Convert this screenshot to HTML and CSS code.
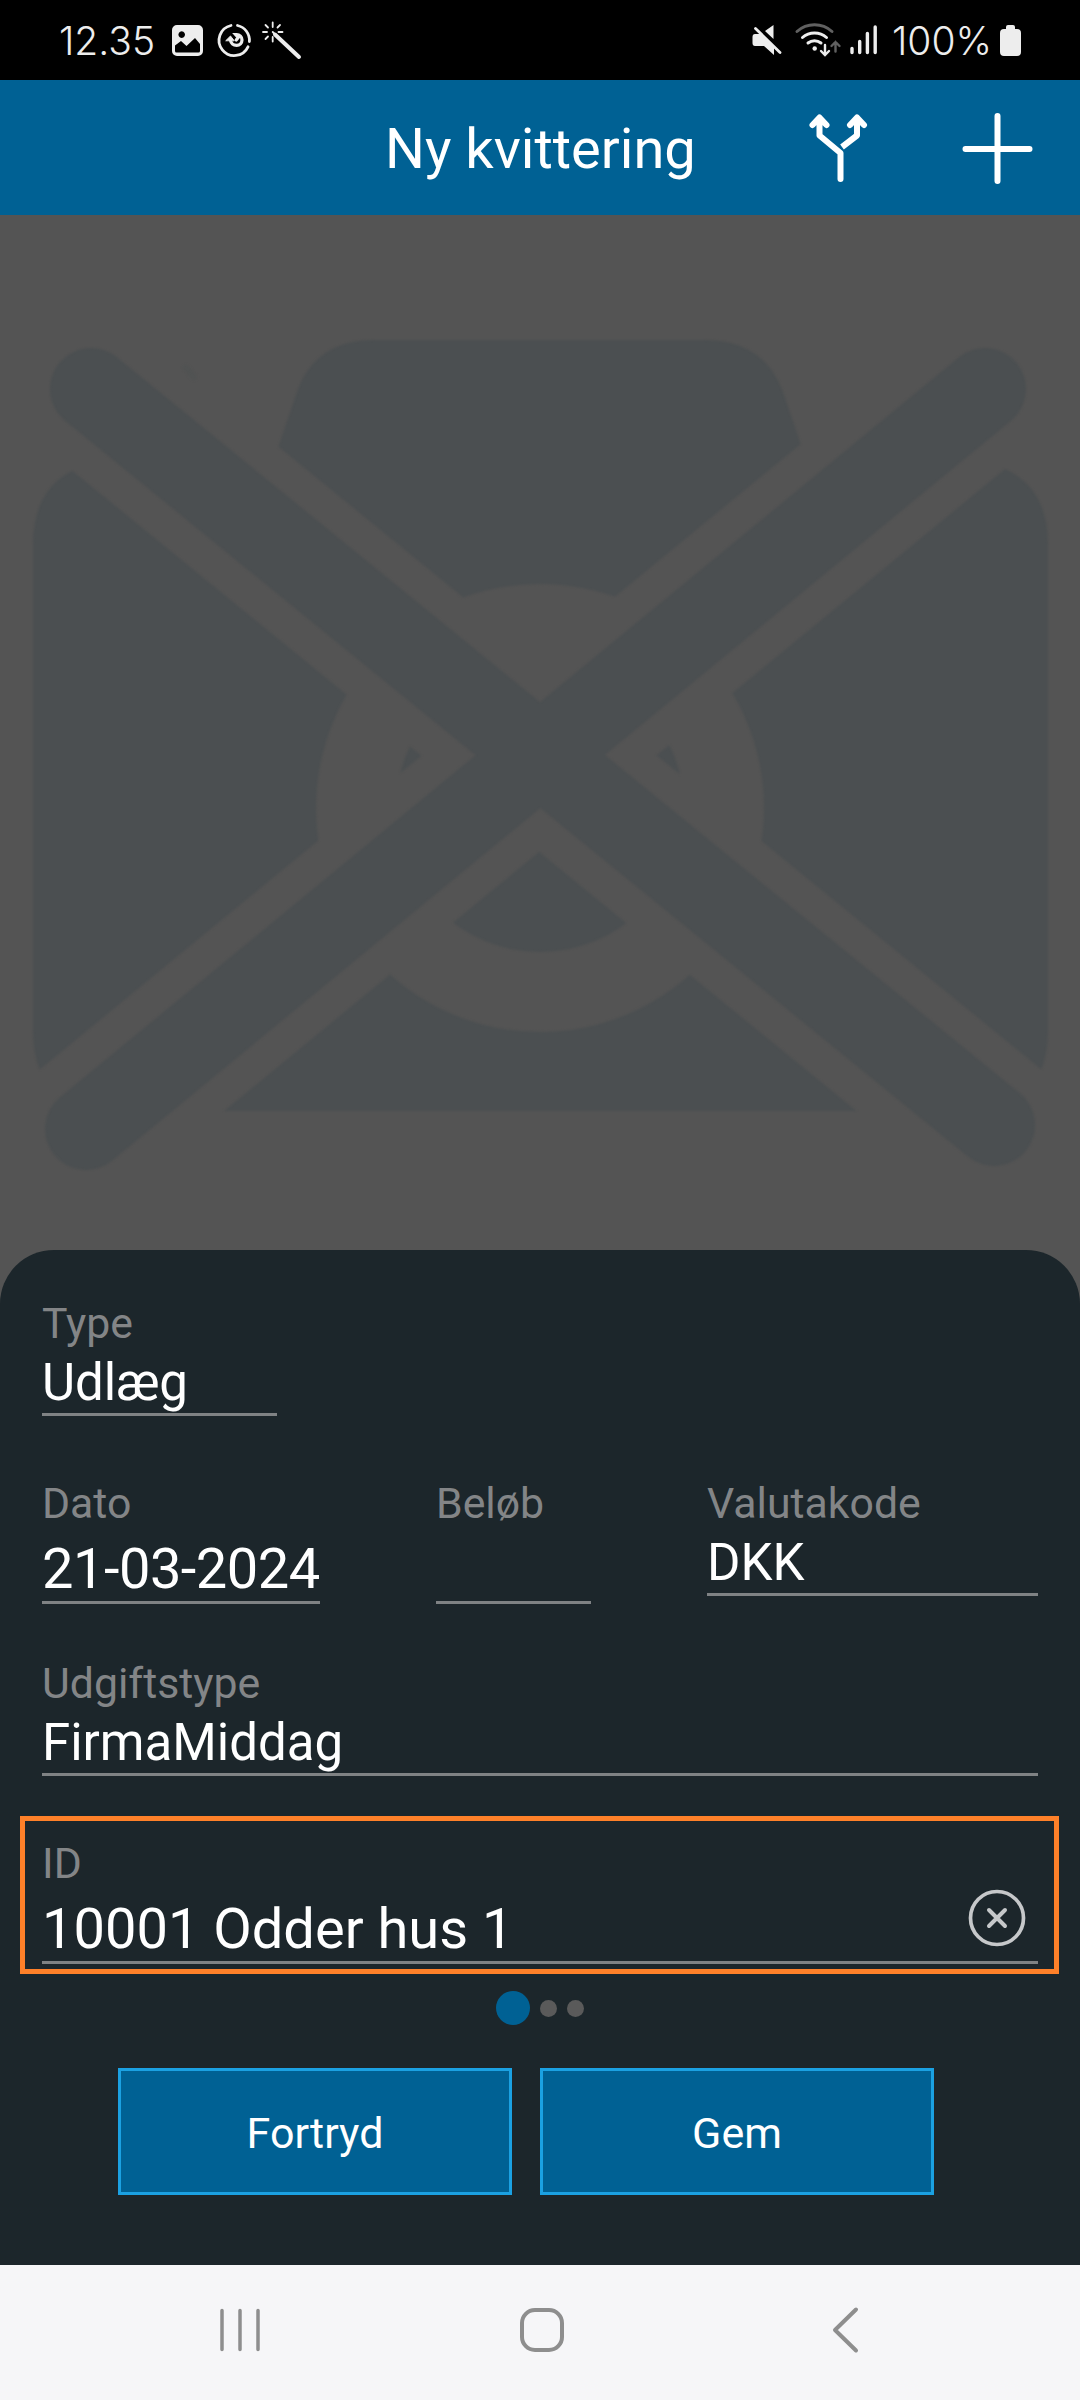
FILE: index.html
```html
<!DOCTYPE html>
<html lang="da">
<head>
<meta charset="utf-8">
<title>Ny kvittering</title>
<link rel="stylesheet" href="styles.css">
</head>
<body>
<div class="status">
  <span class="clock">12.35</span>
  <svg class="status-left" width="134" height="44" viewBox="170 18 134 44" fill="none" stroke="#ededed" stroke-linecap="round">
    <path fill="#ededed" stroke="none" fill-rule="evenodd" d="M177 25h21a5 5 0 0 1 5 5v21a5 5 0 0 1-5 5h-21a5 5 0 0 1-5-5V30a5 5 0 0 1 5-5zM181.700 31.300a3.300 3.300 0 1 0 .01 0zM175 45.500v5.500q0 1.500 1.500 1.500h22q1.500 0 1.500-1.500v-7l-5-6-8.500 8-5.500-5z"/>
    <path stroke-width="2.800" d="M237.500 25.500A15.200 15.200 0 0 1 249.400 41.500M248 46.800A15.200 15.200 0 1 1 231 25.500"/>
    <path stroke-width="3.200" d="M230.500 40.500q1 4.800 6.200 4.800a5.300 5.300 0 0 0 0-10.600h-1l2.500 2.800-2 2.500"/>
    <path fill="#ededed" stroke-width="1" stroke-linejoin="round" d="M226 40.500l4.500-4.500 3.500 4.500z"/>
    <path stroke-width="4" d="M275 34.500L299 57"/>
    <path stroke-width="1.800" d="M272.700 32l2.500 2.500M272.700 22.500v4.500M272.700 37v4.500M263 32h4M278.500 32h4M265.500 25l2.500 2.500M280 25l-2.500 2.500M265.500 39l2.500-2.500"/>
  </svg>
  <svg class="status-right" width="130" height="44" viewBox="750 18 130 44" fill="none" stroke="#ededed" stroke-linecap="round">
    <path fill="#ededed" stroke="none" d="M755 34h6l13 12v9l-10-9h-9q-2.500 0-2.500-3v-6q0-3 2.500-3zM765 31l8.500-6v14z"/>
    <path stroke-width="2.800" d="M755.500 28.500L780 52.500"/>
    <path stroke="#606060" stroke-width="3" d="M797 31.500a26 26 0 0 1 35 0"/>
    <path stroke-width="3" d="M802.500 37.500a18 18 0 0 1 24 0M808 43a10.500 10.500 0 0 1 13 0"/>
    <circle cx="814.700" cy="48.500" r="2.200" fill="#ededed" stroke="none"/>
    <path stroke-width="2.400" d="M825 45v9.500M821 51l4 4 4-4"/>
    <path stroke="#606060" stroke-width="2.400" d="M835.500 51.500v-9.500M831.500 46l4-4 4 4"/>
    <path stroke-width="3.400" d="M852 48.500v4M859.700 41.500v11M867.400 33.500v19M875.200 27v25.500"/>
  </svg>
  <span class="percent">100%</span>
  <svg class="battery" width="21" height="31" viewBox="0 0 21 31" fill="#ededed"><path d="M6 4V2q0-2 2-2h5q2 0 2 2v2h2q4 0 4 4v19q0 4-4 4H4q-4 0-4-4V8q0-4 4-4z"/></svg>
</div>

<header class="appbar">
  <h1 class="title">Ny kvittering</h1>
  <svg class="split" width="60" height="72" viewBox="808 111 60 72" fill="none" stroke="#fff" stroke-width="6" stroke-linejoin="round" stroke-linecap="round">
    <path d="M840.500 178v-26L819.500 134.500V117M812.500 124l7-7.500 7 7.500"/>
    <path stroke-linecap="butt" d="M842 146l15-11.500V117"/>
    <path d="M850 124l7-7.500 7 7.500"/>
  </svg>
  <svg class="plus" width="74" height="74" viewBox="0 0 74 74" fill="none" stroke="#fff" stroke-width="6" stroke-linecap="round"><path d="M37.500 5v65M5.500 38h64"/></svg>
</header>

<main class="preview">
  <svg class="camera" width="1080" height="1035" viewBox="0 215 1080 1035" fill="#4b4f51">
    <mask id="cutout" maskUnits="userSpaceOnUse" x="0" y="215" width="1080" height="1035">
      <rect y="215" width="1080" height="1035" fill="#fff"/>
      <path d="M90 389L994 1127M985 389L86 1128" stroke="#000" stroke-width="149" stroke-linecap="square"/>
    </mask>
    <mask id="lens" maskUnits="userSpaceOnUse" x="0" y="215" width="1080" height="1035">
      <rect y="215" width="1080" height="1035" fill="#fff"/>
      <circle cx="540" cy="808" r="224" fill="#000"/>
      <circle cx="540" cy="808" r="144" fill="#fff"/>
    </mask>
    <g mask="url(#cutout)">
      <path mask="url(#lens)" d="M274 460L297 392Q315 340 375 340H704Q764 340 783 392L806 460H963Q1048 465 1048 545V1030Q1048 1111 965 1111H115Q33 1111 33 1030V545Q33 465 118 460z"/>
    </g>
    <path d="M91 389L994 1125M985 389L86 1129" stroke="#4b4f51" stroke-width="82" stroke-linecap="round"/>
    <path d="M186 368l8 9" stroke="#515353" stroke-width="6" stroke-linecap="round"/>
  </svg>
</main>

<section class="sheet">
  <div class="row">
    <div class="field field-type"><label class="label">Type</label><div class="value">Udlæg</div></div>
  </div>
  <div class="row">
    <div class="field field-date"><label class="label">Dato</label><div class="value entry date">21-03-2024</div></div>
    <div class="field field-amount"><label class="label">Beløb</label><div class="value entry"></div></div>
    <div class="field field-wide"><label class="label">Valutakode</label><div class="value">DKK</div></div>
  </div>
  <div class="row">
    <div class="field field-wide"><label class="label">Udgiftstype</label><div class="value">FirmaMiddag</div></div>
  </div>
  <div class="highlight">
    <div class="field"><label class="label">ID</label>
      <div class="value entry clearable"><span>10001 Odder hus 1</span>
        <svg class="clear" width="58" height="58" viewBox="0 0 58 58" fill="none" stroke="#c6c8ca" stroke-linecap="round"><circle cx="29" cy="29" r="26.500" stroke-width="3.700"/><path stroke-width="4" d="M21 21l16 16M37 21L21 37"/></svg>
      </div>
    </div>
  </div>
  <div class="dots"><i class="dot active"></i><i class="dot"></i><i class="dot"></i></div>
  <div class="actions"><button class="button">Fortryd</button><button class="button">Gem</button></div>
</section>

<nav class="navbar">
  <svg width="1080" height="135" viewBox="0 2265 1080 135" fill="none" stroke="#8e8e8e" stroke-linecap="round">
    <path stroke-width="3.500" d="M222 2310.500v39M240 2310.500v39M258 2310.500v39"/>
    <rect x="522" y="2310" width="40" height="40" rx="13" stroke-width="4"/>
    <path stroke-width="4" stroke-linejoin="round" d="M856 2309.500L835 2330l21 20.500"/>
  </svg>
</nav>
</body>
</html>
```
FILE: styles.css
```css
* { box-sizing: border-box; }
body {
  margin: 0;
  width: 1080px;
  height: 2400px;
  display: flex;
  flex-direction: column;
  background: #545454;
  font-family: Roboto, "Liberation Sans", sans-serif;
  color: #fff;
}
svg { display: block; flex: none; }

.status {
  height: 80px;
  display: flex;
  align-items: center;
  padding: 0 59px;
  background: #000;
  color: #ededed;
  font-family: Inter, Roboto, sans-serif;
  font-size: 39px;
  font-weight: 350;
}
.clock { width: 111px; }
.status-right { margin-left: auto; }
.percent { width: 108px; margin-left: 12px; white-space: nowrap; }

.appbar {
  height: 135px;
  display: flex;
  align-items: center;
  background: #006194;
  padding: 0 46px 0 385px;
}
.title {
  width: 423px;
  margin: 0;
  padding-top: 2px;
  font-size: 56px;
  font-weight: 400;
  line-height: 68px;
  white-space: nowrap;
}
.plus { margin-left: auto; }

.preview { height: 1035px; }
.camera { filter: blur(1.2px); }

.sheet {
  height: 1015px;
  padding-top: 48px;
  background: #1c262b;
  border-radius: 54px 54px 0 0;
}
.row { display: flex; align-items: flex-start; gap: 116px; height: 180px; padding: 0 42px; }
.field-type { width: 235px; }
.field-date { width: 278px; }
.field-amount { width: 155px; }
.field-wide { flex: 1; }
.label { display: block; font-size: 42.800px; line-height: 50px; color: #838587; }
.value {
  height: 68px;
  padding-top: 5px;
  border-bottom: 3px solid #7f8284;
  font-size: 51px;
  line-height: 60px;
  white-space: nowrap;
}
.value.entry { height: 76px; padding-top: 8px; font-size: 56px; line-height: 66px; }
.value.date { letter-spacing: -0.500px; }
.highlight {
  height: 158px;
  margin: -22px 21px 0 20px;
  border: 5px solid #fe8029;
  padding: 17px 16px 0 17px;
}
.clearable { display: flex; justify-content: space-between; }
.clear { margin: -7px 12px 0 0; }
.dots { display: flex; align-items: center; justify-content: center; gap: 10px; height: 34px; margin-top: 17px; }
.dot { width: 17px; height: 17px; border-radius: 50%; background: #5a5a5a; }
.dot.active { width: 34px; height: 34px; background: #006194; }
.actions { display: flex; gap: 28px; padding-left: 118px; margin-top: 43px; }
.button {
  width: 394px;
  height: 127px;
  padding: 3px 0 0;
  border: 3px solid #1ba1e2;
  background: #006194;
  color: #fff;
  font: 43px/52px Roboto, sans-serif;
}
.navbar { height: 135px; background: #f6f6f8; }
```
